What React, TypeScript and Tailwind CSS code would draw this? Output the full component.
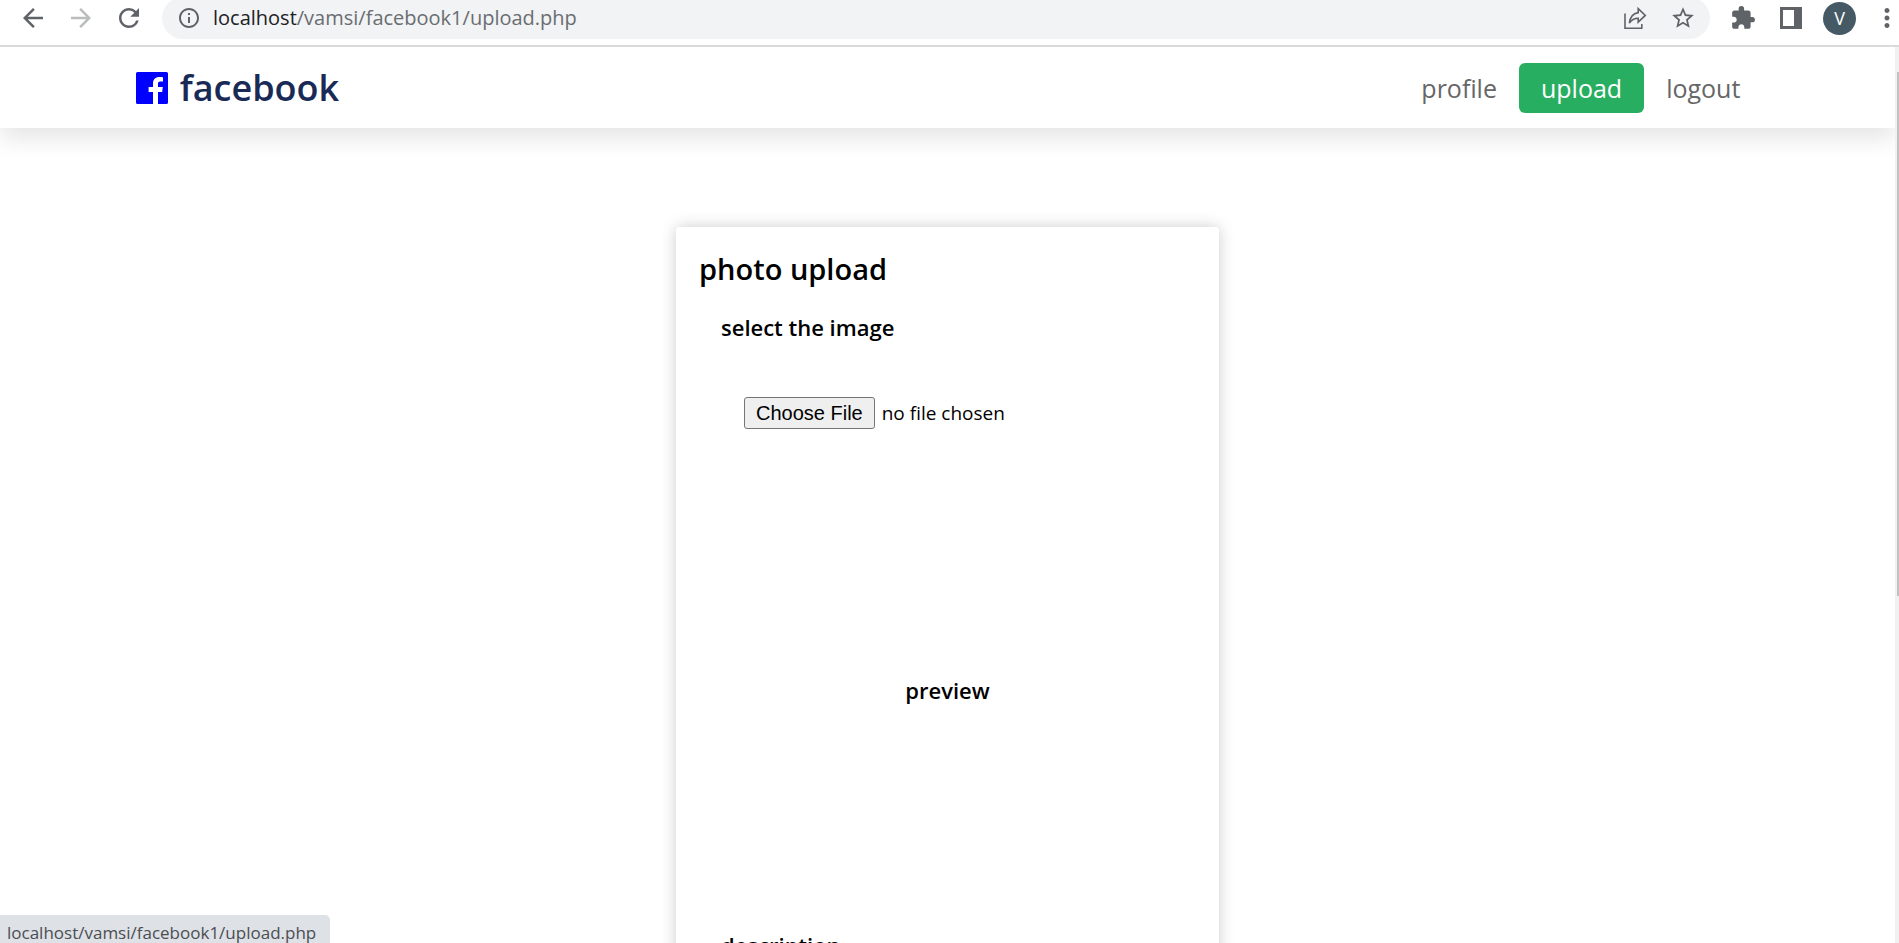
import {
  MdArrowBack,
  MdArrowForward,
  MdExtension,
  MdInfoOutline,
  MdMoreVert,
  MdRefresh,
  MdStarBorder,
} from 'react-icons/md';

function ShareIcon() {
  return (
    <svg width="24" height="24" viewBox="0 0 24 24" fill="none" stroke="currentColor" strokeWidth="1.6">
      <path d="M2 7.5V22.2H18.8V18" />
      <path d="M15.2 2.6L22.3 9.4L15.2 16.2V12.2C11 12.2 8.6 13.6 6.4 17.2C7 11.4 9.8 7.4 15.2 6.6Z" />
    </svg>
  );
}

function SidePanelIcon() {
  return (
    <svg width="22" height="22" viewBox="0 0 22 22" fill="currentColor">
      <path fillRule="evenodd" d="M0 0H22V22H0ZM3 3V19H14V3Z" />
    </svg>
  );
}

function FacebookMark() {
  return (
    <svg width="32" height="32" viewBox="0 0 32 32" aria-hidden="true">
      <path
        fill="#0000ff"
        d="M1.5 0H30.5Q32 0 32 1.5V30.5Q32 32 30.5 32H22V20H26.2L26.8 15H22V12C22 10.4 22.6 9.6 24.4 9.6H27V5.2C26.4 5.1 25 5 23.3 5C19.5 5 17 7.3 17 11.4V15H12.6V20H17V32H1.5Q0 32 0 30.5V1.5Q0 0 1.5 0Z"
      />
    </svg>
  );
}

function BrowserBar() {
  return (
    <div className="shrink-0 border-b-2 border-[#d9dadb] bg-white">
      <div className="-mt-[3px] mb-[6px] flex h-[42px] items-center pr-[5px] text-[#5f6368]">
        <div className="flex gap-[18px] px-[18px]">
          <button aria-label="Back"><MdArrowBack size={30} /></button>
          <button aria-label="Forward" className="text-[#babcbe]"><MdArrowForward size={30} /></button>
          <button aria-label="Reload"><MdRefresh size={30} /></button>
        </div>
        <div className="flex h-full flex-1 items-center rounded-full bg-[#f1f3f4] pl-[15px] pr-[14px]">
          <button aria-label="Site information"><MdInfoOutline size={24} /></button>
          <div className="ml-3 flex-1 text-xl text-[#6a6d71]">
            <span className="text-[#202124]">localhost</span>/vamsi/facebook1/upload.php
          </div>
          <div className="flex items-center gap-[23px]">
            <button aria-label="Share"><ShareIcon /></button>
            <button aria-label="Bookmark"><MdStarBorder size={26} /></button>
          </div>
        </div>
        <div className="flex items-center pl-[20px]">
          <button aria-label="Extensions"><MdExtension size={26} /></button>
          <button aria-label="Side panel" className="ml-6"><SidePanelIcon /></button>
          <button aria-label="Profile" className="ml-[21px] mr-4 size-[33px] rounded-full bg-[#455a64] text-center text-lg text-white">V</button>
          <button aria-label="Menu" className="-mr-[8px]"><MdMoreVert size={30} /></button>
        </div>
      </div>
    </div>
  );
}

function SiteHeader() {
  return (
    <header className="flex items-center justify-between bg-white px-[7%] pb-[15px] pt-4 shadow-[0_11px_22px_rgba(0,0,0,0.1)]">
      <a href="#home" className="flex items-center gap-3 pl-[3px] text-[36px]/[48px] font-semibold text-[#192a56]">
        <FacebookMark />
        facebook
      </a>
      <nav className="flex items-center text-[25px]/[34px] text-[#666666]">
        <a href="#profile" className="px-[22px] py-2">profile</a>
        <a href="#upload" className="rounded-[6px] bg-[#27ae60] px-[22px] py-2 font-medium text-white">upload</a>
        <a href="#logout" className="px-[22px] py-2">logout</a>
      </nav>
    </header>
  );
}

function UploadCard() {
  return (
    <form className="mx-auto mt-[99px] w-[543px] rounded-[4px] bg-white px-[23px] py-[22px] text-black shadow-[0_0_16px_rgba(0,0,0,0.2)]">
      <h1 className="text-[29px]/[40px] font-semibold">photo upload</h1>
      <div className="px-[22px] pt-[22px]">
        <label htmlFor="photo" className="block text-[22px]/[32px] font-semibold">select the image</label>
        <div className="px-[23px] pb-[22px] pt-[54px]">
          <input
            id="photo"
            type="file"
            className="block h-8 w-full text-[19px]/[32px] lowercase file:mr-[7px] file:h-8 file:rounded-[3px] file:border file:border-solid file:border-[#767676] file:bg-[#efefef] file:px-[11px] file:font-['Liberation_Sans',sans-serif] file:text-xl/[28px] file:font-normal file:normal-case file:text-black"
          />
        </div>
        <div className="flex h-[478px] items-center justify-center text-[22px]/[32px] font-semibold">preview</div>
        <label htmlFor="description" className="block text-[22px]/[32px] font-semibold">description</label>
        <textarea id="description" className="mt-4 h-24 w-full border border-[#767676]" />
      </div>
    </form>
  );
}

export default function App() {
  return (
    <div className="relative flex h-screen flex-col overflow-hidden bg-white font-['Open_Sans',sans-serif]">
      <BrowserBar />
      <div className="flex min-h-0 flex-1">
        <main className="flex-1 overflow-hidden">
          <SiteHeader />
          <UploadCard />
        </main>
        <div aria-hidden="true" className="w-1 bg-[#f1f1f1] pl-[2px] pt-[25px]">
          <div className="h-[524px] bg-[#c1c1c1]" />
        </div>
      </div>
      <div className="absolute bottom-0 left-0 h-7 rounded-tr-[5px] bg-[#dee1e6] pl-[7px] pr-[14px] pt-1 text-[17px]/[28px] text-[#4b4e52]">
        localhost/vamsi/facebook1/upload.php
      </div>
    </div>
  );
}
